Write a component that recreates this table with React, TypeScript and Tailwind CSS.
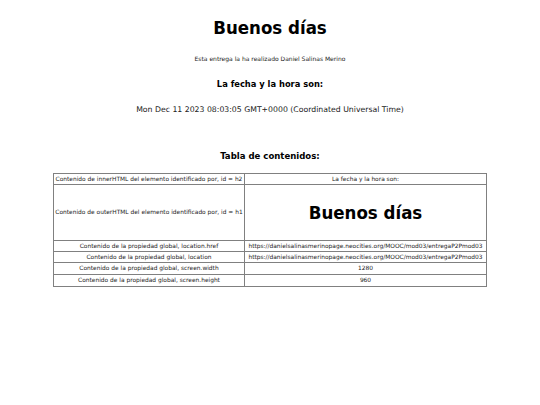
export default function App() {
  const font = { fontFamily: '"DejaVu Sans", Verdana, sans-serif' };
  const cond = { fontFamily: '"DejaVu Sans Condensed", "DejaVu Sans", sans-serif' };
  const rows: [string, React.ReactNode, string][] = [
    ["Contenido de innerHTML del elemento identificado por, id = h2", "La fecha y la hora son:", "h-[11px]"],
    [
      "Contenido de outerHTML del elemento identificado por, id = h1",
      <span className="text-[18.5px] font-bold text-black" style={cond}>Buenos días</span>,
      "h-[56px]",
    ],
    ["Contenido de la propiedad global, location.href", "https://danielsalinasmerinopage.neocities.org/MOOC/mod03/entregaP2Pmod03", "h-[11px]"],
    ["Contenido de la propiedad global, location", "https://danielsalinasmerinopage.neocities.org/MOOC/mod03/entregaP2Pmod03", "h-[11px]"],
    ["Contenido de la propiedad global, screen.width", "1280", "h-[12px]"],
    ["Contenido de la propiedad global, screen.height", "960", "h-[12px]"],
  ];
  return (
    <div className="w-[540px] h-[405px] bg-white text-black flex flex-col items-center" style={font}>
      <h1 className="mt-[17px] text-[18.5px] font-bold leading-[21px]" style={cond}>Buenos días</h1>
      <p className="mt-[17px] text-[6px] leading-[8px] text-[#222]">Esta entrega la ha realizado Daniel Salinas Merino</p>
      <h2 className="mt-[15px] text-[9.25px] font-bold leading-[12px]" style={cond}>La fecha y la hora son:</h2>
      <p className="mt-[15px] text-[7.75px] leading-[10px] text-[#222]">Mon Dec 11 2023 08:03:05 GMT+0000 (Coordinated Universal Time)</p>
      <h2 className="mt-[35px] text-[9.5px] font-bold leading-[12px]" style={cond}>Tabla de contenidos:</h2>
      <table className="mt-[11px] w-[434px] border-collapse border border-[#a0a0a0] text-[5.9px] text-[#222]">
        <tbody>
          {rows.map(([a, b, h], i) => (
            <tr key={i} className={h}>
              <td className="border border-[#808080] text-center p-0 w-[191px] whitespace-nowrap">{a}</td>
              <td className="border border-[#808080] text-center p-0 whitespace-nowrap">{b}</td>
            </tr>
          ))}
        </tbody>
      </table>
    </div>
  );
}
